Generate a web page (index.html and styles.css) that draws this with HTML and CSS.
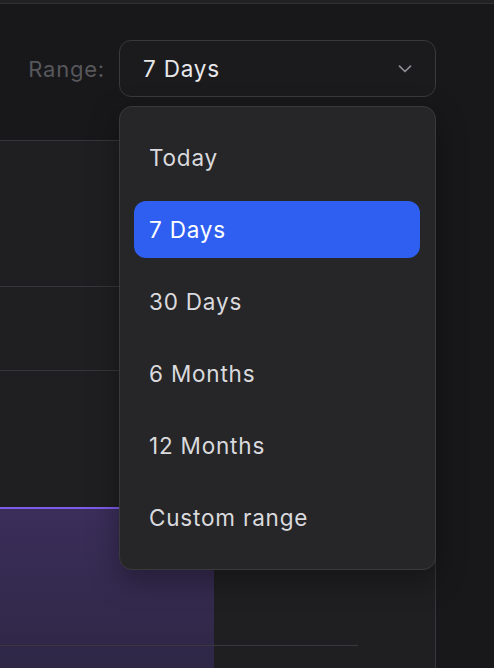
FILE: index.html
```html
<!DOCTYPE html>
<html>
<head>
  <meta charset="UTF-8" />
  <title>Range picker</title>
  <link rel="stylesheet" href="styles.css">
</head>
<body>
  <div class="topbar"></div>

  <div class="page">
    <!-- Range selector -->
    <div class="toolbar">
      <span class="label">Range:</span>
      <div class="select">
        <div class="select-trigger">
          <span>7 Days</span>
          <svg class="chevron" width="14" height="8" viewBox="0 0 14 8">
            <path d="M1.5 1.2 L7 6.5 L12.5 1.2" fill="none" stroke="currentColor" stroke-width="1.7" stroke-linecap="round" stroke-linejoin="round"/>
          </svg>
        </div>

        <!-- Open menu -->
        <ul class="menu">
          <li class="item">Today</li>
          <li class="item selected">7 Days</li>
          <li class="item">30 Days</li>
          <li class="item">6 Months</li>
          <li class="item">12 Months</li>
          <li class="item">Custom range</li>
        </ul>
      </div>
    </div>

    <!-- Card behind the menu -->
    <div class="card">
      <div class="card-head"></div>
      <div class="card-stats"></div>
      <div class="chart">
        <div class="bar"></div>
        <div class="gridline"></div>
      </div>
    </div>
  </div>
</body>
</html>
```

FILE: styles.css
```css
html, body {
  margin: 0;
  height: 100%;
  overflow: hidden;
}

body {
  background: #18181b;
  font-family: Inter, "Noto Sans", sans-serif;
  color: #e4e4e7;
  letter-spacing: 0.8px;
}

/* thin strip at the very top */
.topbar {
  height: 3px;
  background: #222225;
  border-bottom: 1px solid #303033;
}

.page {
  padding-right: 58px;
}

/* Toolbar with label and select */
.toolbar {
  display: flex;
  justify-content: flex-end;
  align-items: center;
  gap: 14px;
  margin-top: 36px;
}

.label {
  font-size: 22px;
  color: #57575c;
}

.select {
  position: relative;
  width: 317px;
}

.select-trigger {
  box-sizing: border-box;
  height: 57px;
  display: flex;
  align-items: center;
  justify-content: space-between;
  padding: 0 23px 0 23px;
  border: 1px solid #3a3a3d;
  border-radius: 12px;
  background: #1b1b1e;
  font-size: 22.5px;
  color: #e8e8eb;
}

.chevron {
  color: #8d8d92;
}

/* Dropdown menu, lies over the card */
.menu {
  position: absolute;
  top: 66px;
  left: 0;
  right: 0;
  z-index: 2;
  margin: 0;
  padding: 22px 15px 23px 14px;
  list-style: none;
  display: flex;
  flex-direction: column;
  gap: 15px;
  background: #262628;
  border: 1px solid #3a3a3c;
  border-radius: 13px;
  box-shadow: 0 10px 30px rgba(0, 0, 0, 0.35);
}

.item {
  height: 57px;
  padding-left: 15px;
  display: flex;
  align-items: center;
  border-radius: 12px;
  font-size: 22.5px;
  color: #dadade;
}

.item.selected {
  background: #2f5ff1;
  color: #ffffff;
}

/* Card */
.card {
  margin-top: 43px;
  margin-left: -20px;
  height: 600px;
  background: #1f1f21;
  border-top: 1px solid #36363a;
  border-right: 1px solid #36363a;
  border-top-right-radius: 16px;
}

.card-head {
  height: 145px;
  border-bottom: 1px solid #36363a;
}

.card-stats {
  height: 83px;
  border-bottom: 1px solid #36363a;
}

.chart {
  position: relative;
  height: 400px;
  padding-top: 136px;
}

.bar {
  margin-left: 20px;
  width: 214px;
  height: 200px;
  border-top: 2px solid #7b5ce8;
  background: linear-gradient(#3b2e5a, #2b2540);
}

.gridline {
  position: absolute;
  top: 274px;
  left: 20px;
  width: 358px;
  height: 1px;
  background: #39393d;
}
```
